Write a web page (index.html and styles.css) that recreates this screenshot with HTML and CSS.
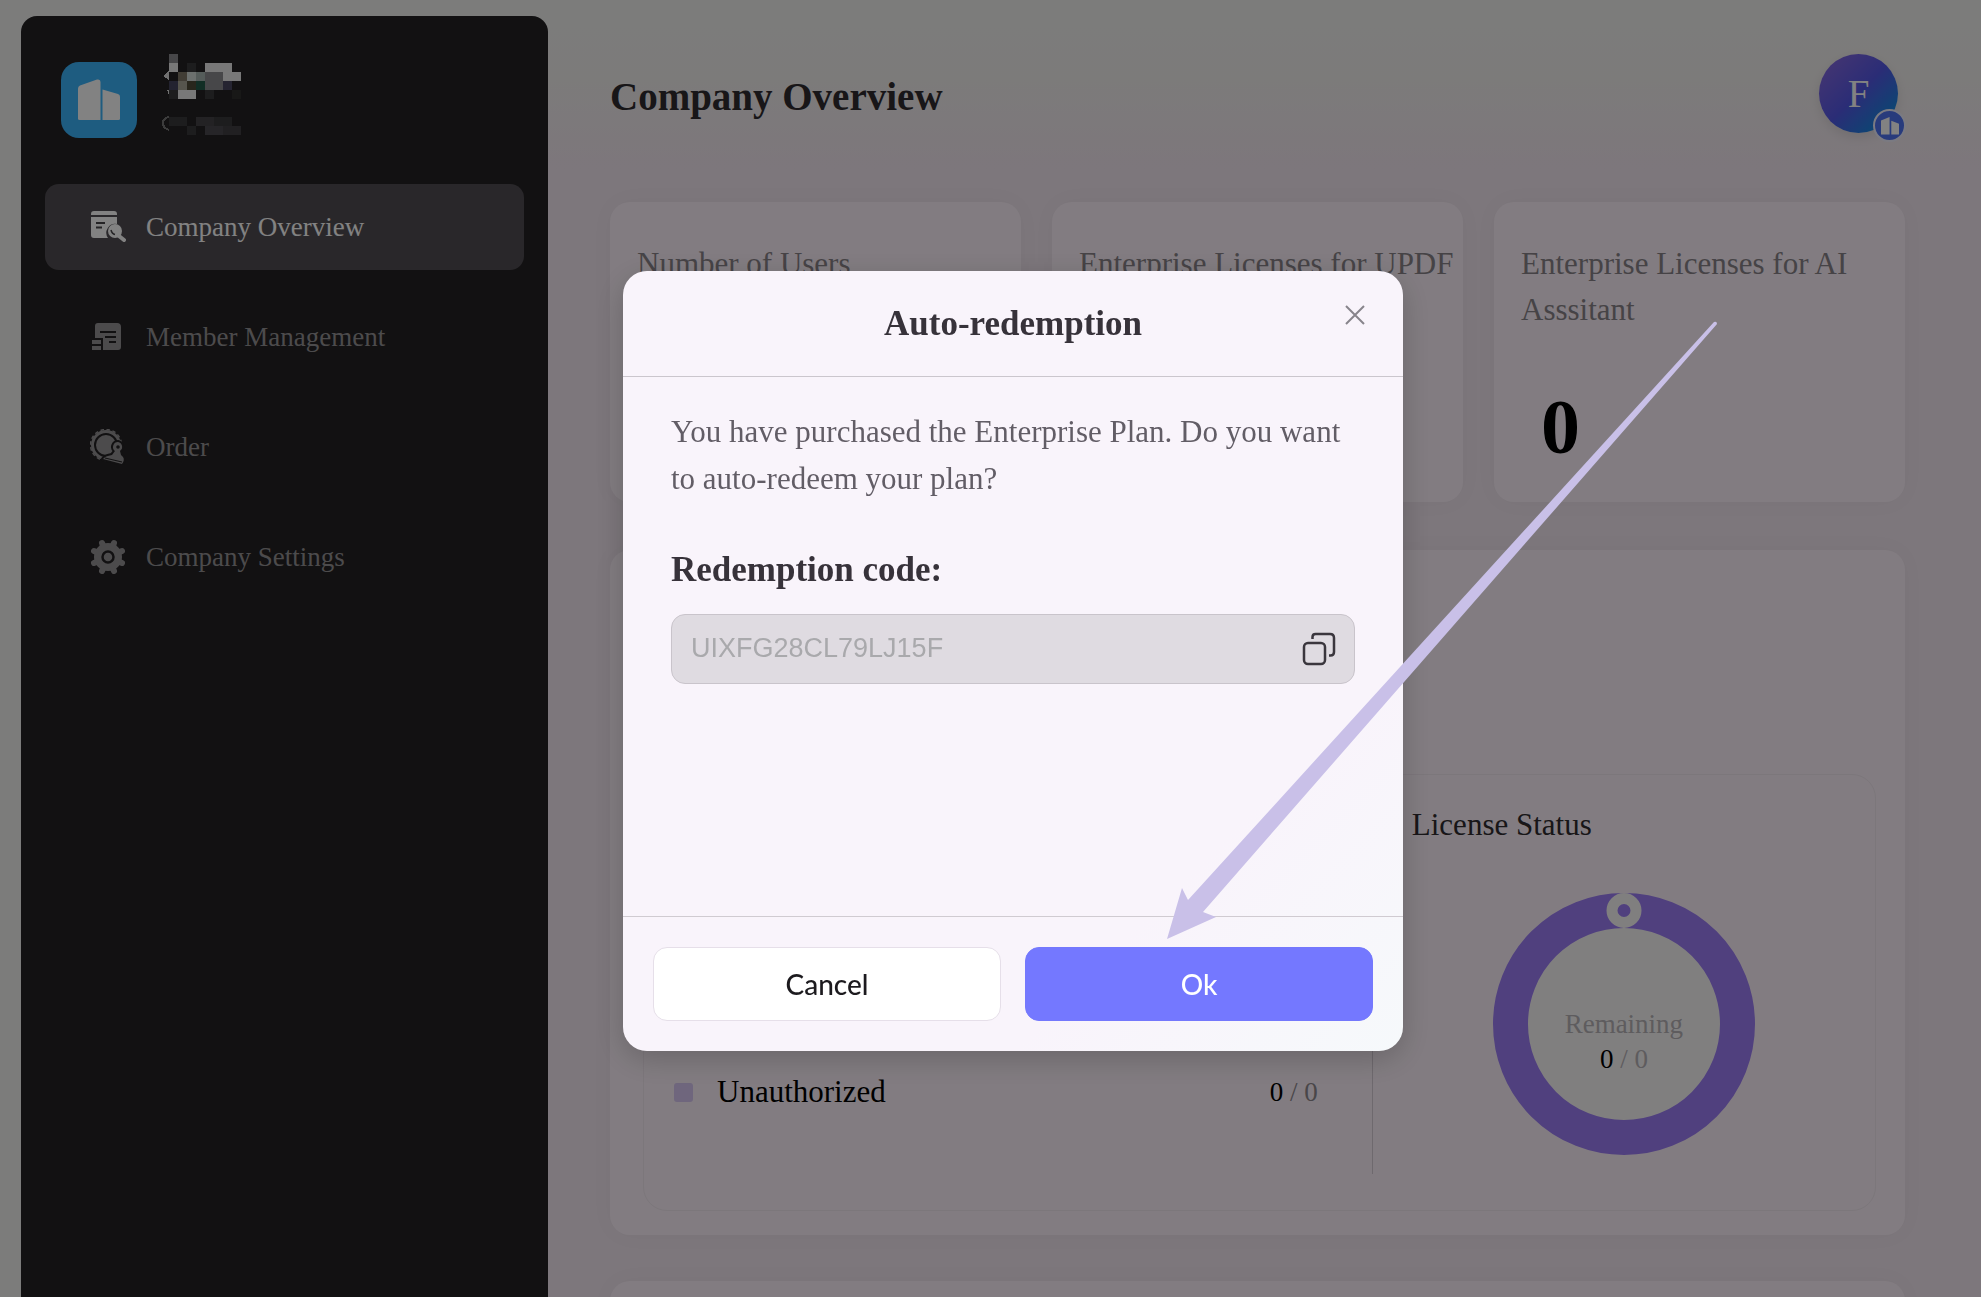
FILE: index.html
```
<!DOCTYPE html>
<html lang="en">
<head>
    <meta charset="UTF-8">
    <meta name="viewport" content="width=device-width, initial-scale=1.0">
    <title>Company Overview</title>
    <link rel="stylesheet" href="styles.css">
</head>
<body>
    <div class="app">
        <aside class="sidebar">
            <div class="company">
                <div class="company-logo">
                    <svg width="42" height="42" viewBox="0 0 42 42" fill="#fff">
                        <path d="M0 9.500Q0 7.500 2 6.500L19 .6Q22.500-.2 22.500 3V41H1.500Q0 41 0 39.500Z"/>
                        <path d="M24.500 10.500L40 15Q42 15.800 42 17.500V39.500Q42 41 40.500 41H24.500Z"/>
                    </svg>
                </div>
                <!-- name and role are masked -->
                <svg class="company-mask" width="80" height="82" viewBox="-8 0 80 82" shape-rendering="crispEdges">
                    <path d="M-6 22L0 17V26ZM-2 36H0V41Z" fill="#ddd"/>
                    <g fill="#ececec">
                        <rect x="0" y="9" width="9" height="9"/>
                        <rect x="36" y="9" width="27" height="9"/>
                        <rect x="54" y="18" width="18" height="9"/>
                        <rect x="9" y="36" width="18" height="9"/>
                    </g>
                    <g fill="#8c8c90">
                        <rect x="0" y="0" width="9" height="9"/>
                        <rect x="36" y="18" width="18" height="18"/>
                        <rect x="27" y="18" width="9" height="9" fill="#a8b4b0"/>
                        <rect x="18" y="18" width="9" height="9" fill="#d4dcd8"/>
                        <rect x="9" y="18" width="9" height="9" fill="#807868"/>
                        <rect x="9" y="27" width="9" height="9" fill="#aaa898"/>
                        <rect x="18" y="27" width="9" height="9" fill="#504c38"/>
                        <rect x="27" y="27" width="9" height="9" fill="#245a4a"/>
                        <rect x="0" y="27" width="9" height="9" fill="#46465e"/>
                        <rect x="54" y="27" width="9" height="9" fill="#4a4860"/>
                    </g>
                    <g fill="#3a3a3c">
                        <rect x="18" y="9" width="9" height="9"/>
                        <rect x="0" y="36" width="9" height="9"/>
                        <rect x="36" y="36" width="9" height="9"/>
                        <rect x="63" y="36" width="9" height="9" fill="#30302e"/>
                        <rect x="0" y="63" width="18" height="9"/>
                        <rect x="27" y="63" width="18" height="9" fill="#464448"/>
                        <rect x="45" y="63" width="18" height="9"/>
                        <rect x="18" y="72" width="9" height="9"/>
                        <rect x="36" y="72" width="18" height="9" fill="#4c4a50"/>
                        <rect x="54" y="72" width="18" height="9" fill="#424044"/>
                    </g>
                    <path d="M0 63Q-6 64-6 69T0 76" fill="none" stroke="#777" stroke-width="2"/>
                </svg>
            </div>
            <nav class="menu">
                <a class="menu-item active" href="#overview">
                    <svg width="36" height="36" viewBox="0 0 36 36">
                        <path d="M1 5Q1 2 4 2H24Q27 2 27 5V6H1ZM1 8H27V15A9 9 0 0 0 18 29H4Q1 29 1 26Z" fill="currentColor"/>
                        <path d="M6 14H15M6 18.500H12" stroke="#4a484c" stroke-width="1.800"/>
                        <circle cx="25" cy="22" r="7" fill="currentColor"/>
                        <path d="M21 21Q22 25 25 25.500" fill="none" stroke="#4a484c" stroke-width="1.500"/>
                        <path d="M29 27L34 31" stroke="currentColor" stroke-width="4" stroke-linecap="round"/>
                    </svg>
                    <span>Company Overview</span>
                </a>
                <a class="menu-item" href="#members">
                    <svg width="36" height="36" viewBox="0 0 36 36">
                        <path d="M5 7Q5 4 8 4H27Q31 4 31 8V28Q31 31 28 31H13V19H5Z" fill="currentColor"/>
                        <path d="M10 13H26M15 18H26M19 23H26" stroke="#242224" stroke-width="2"/>
                        <path d="M2 21H11V25H2ZM2 27H11V31H2Z" fill="currentColor"/>
                    </svg>
                    <span>Member Management</span>
                </a>
                <a class="menu-item" href="#orders">
                    <svg width="36" height="36" viewBox="0 0 36 36">
                        <circle cx="16" cy="16" r="13.500" fill="none" stroke="currentColor" stroke-width="3"/>
                        <circle cx="16" cy="16" r="15.500" fill="none" stroke="currentColor" stroke-width="1.500" stroke-dasharray="3.500 2.590"/>
                        <circle cx="16" cy="16" r="10" fill="currentColor"/>
                        <path d="M28 13A5 5 0 0 1 30 22L31 26L33 28Q35 31 32 35L13 30Q15 27 22 26L25 22A5 5 0 0 1 28 13Z" fill="currentColor" stroke="#242224" stroke-width="4" paint-order="stroke" stroke-linejoin="round"/>
                        <circle cx="28" cy="18" r="1.800" fill="#242224"/>
                        <path d="M15 29L32 33" stroke="#242224" stroke-width="1.200"/>
                    </svg>
                    <span>Order</span>
                </a>
                <a class="menu-item" href="#settings">
                    <svg width="36" height="36" viewBox="0 0 36 36">
                        <circle cx="18" cy="18" r="14" fill="currentColor"/>
                        <path d="M12 4L24 32M24 4L12 32M4 12L32 24M4 24L32 12" stroke="currentColor" stroke-width="6" stroke-linecap="round"/>
                        <circle cx="18" cy="18" r="5.500" fill="none" stroke="#242224" stroke-width="2.500"/>
                    </svg>
                    <span>Company Settings</span>
                </a>
            </nav>
        </aside>

        <main class="content">
            <header class="page-header">
                <h1>Company Overview</h1>
                <div class="avatar">
                    F
                    <span class="avatar-badge">
                        <svg width="18" height="18" viewBox="0 0 42 42" fill="#fff">
                            <path d="M0 8L20 0V41H0ZM24 9L42 16V41H24Z"/>
                        </svg>
                    </span>
                </div>
            </header>

            <section class="stats">
                <div class="card stat">
                    <p class="stat-label">Number of Users</p>
                </div>
                <div class="card stat">
                    <p class="stat-label">Enterprise Licenses for UPDF</p>
                </div>
                <div class="card stat">
                    <p class="stat-label">Enterprise Licenses for AI Asssitant</p>
                    <p class="stat-value">0</p>
                </div>
            </section>

            <section class="card licenses">
                <div class="panel">
                    <div class="panel-list">
                        <div class="legend">
                            <span class="legend-mark"></span>
                            <span class="legend-name">Unauthorized</span>
                            <span class="count">0 <span class="muted">/ 0</span></span>
                        </div>
                    </div>
                    <div class="panel-divider"></div>
                    <div class="panel-status">
                        <h2>License Status</h2>
                        <div class="ring">
                            <span class="ring-dot"></span>
                            <span class="ring-label">Remaining</span>
                            <span class="count">0 <span class="ring-total">/ 0</span></span>
                        </div>
                    </div>
                </div>
            </section>

            <section class="card next"></section>
        </main>
    </div>

    <div class="overlay">
        <div class="modal" role="dialog" aria-labelledby="modalTitle">
            <div class="modal-header">
                <h2 id="modalTitle">Auto-redemption</h2>
                <button class="close" aria-label="Close">
                    <svg width="20" height="20" viewBox="0 0 20 20" stroke="#88848b" stroke-width="2">
                        <path d="M1 1L19 19M19 1L1 19"/>
                    </svg>
                </button>
            </div>
            <div class="modal-body">
                <p>You have purchased the Enterprise Plan. Do you want to auto-redeem your plan?</p>
                <label for="code">Redemption code:</label>
                <div class="code-box">
                    <input id="code" type="text" value="UIXFG28CL79LJ15F" disabled>
                    <button class="copy" aria-label="Copy">
                        <svg width="34" height="34" viewBox="0 0 34 34" fill="none" stroke="#3a363d" stroke-width="2.500">
                            <rect x="2" y="11" width="21" height="21" rx="4"/>
                            <path d="M10.500 7V5Q10.500 2 13.500 2H28Q32 2 32 6V20Q32 23.500 28.500 23.500H27"/>
                        </svg>
                    </button>
                </div>
            </div>
            <div class="modal-footer">
                <button class="btn">Cancel</button>
                <button class="btn btn-primary">Ok</button>
            </div>
            <svg class="arrow" width="552" height="620" viewBox="0 0 552 620">
                <path d="M0 619L15 568L21 580L547 2Q550 1 550 4L36 592L49 597Z" fill="#c9c0e8"/>
            </svg>
        </div>
    </div>
</body>
</html>
```
FILE: styles.css
```
* {
    box-sizing: border-box;
}
body {
    margin: 0;
    font-family: "Liberation Serif", "Times New Roman", serif;
    font-size: 27px;
    color: #000;
}
h1, h2, p {
    margin: 0;
}
button {
    cursor: pointer;
}

/* page behind the dialog */
.app {
    display: flex;
    height: 100vh;
    overflow: hidden;
    background-color: #f4f4f2;
}
.sidebar {
    flex: none;
    width: 527px;
    margin: 16px 0 0 21px;
    padding: 0 24px;
    background-color: #242224;
    border-radius: 16px 16px 0 0;
}
.company {
    display: flex;
    gap: 24px;
    padding: 38px 16px 38px;
}
.company-logo {
    display: flex;
    align-items: center;
    justify-content: center;
    width: 76px;
    height: 76px;
    margin-top: 8px;
    border-radius: 18px;
    background-color: #3cb4fc;
}
.menu {
    display: flex;
    flex-direction: column;
    gap: 24px;
    margin-top: 8px;
}
.menu-item {
    display: flex;
    align-items: center;
    gap: 20px;
    height: 86px;
    padding: 0 45px;
    border-radius: 14px;
    color: #969496;
    text-decoration: none;
}
.menu-item.active {
    background-color: #524e54;
    color: #fff;
}
.content {
    flex: 1;
    padding: 0 76px 0 62px;
    background: linear-gradient(180deg, #f4f4f2 0, #f4f1f0 80px, #f5e9f3 170px);
}
.page-header {
    display: flex;
    align-items: center;
    justify-content: space-between;
    padding: 54px 7px 69px 0;
}
h1 {
    padding-top: 5px;
    font-size: 39px;
    color: #302c30;
}
.avatar {
    position: relative;
    display: flex;
    align-items: center;
    justify-content: center;
    width: 79px;
    height: 79px;
    border-radius: 50%;
    background: linear-gradient(135deg, #8468e0 10%, #5458e8 50%, #1090e0 90%);
    box-shadow: 0 4px 12px rgba(0, 0, 0, 0.1);
    color: #fff;
    font-size: 39px;
}
.avatar-badge {
    position: absolute;
    right: -8px;
    bottom: -9px;
    display: flex;
    align-items: center;
    justify-content: center;
    width: 33px;
    height: 33px;
    border: 2px solid #f0f0ff;
    border-radius: 50%;
    background-color: #5074f4;
}
.card {
    border-radius: 20px;
    background-color: #fff4fd;
    box-shadow: 0 0 24px rgba(0, 0, 0, 0.03);
}
.stats {
    display: grid;
    grid-template-columns: repeat(3, 1fr);
    gap: 31px;
    margin-bottom: 48px;
}
.stat {
    display: flex;
    flex-direction: column;
    justify-content: space-between;
    min-height: 300px;
    padding: 39px 0 35px 27px;
}
.stat-label {
    font-size: 31px;
    line-height: 46px;
    color: #8a848a;
}
.stat-value {
    padding-left: 20px;
    font-size: 78px;
    font-weight: bold;
    line-height: 80px;
}
.licenses {
    margin-bottom: 46px;
    padding: 224px 29px 24px 33px;
}
.panel {
    display: grid;
    grid-template-columns: 729fr 1px 503fr;
    border: 1px solid #f4e9f2;
    border-radius: 24px;
}
.panel-list {
    display: flex;
    flex-direction: column;
    justify-content: flex-end;
    padding: 0 54px 98px 30px;
}
.legend {
    display: flex;
    align-items: center;
    gap: 24px;
    line-height: 40px;
}
.legend-mark {
    width: 19px;
    height: 19px;
    border-radius: 3px;
    background-color: #d9c9f6;
}
.legend-name {
    flex: 1;
    font-size: 31px;
}
.muted {
    color: #908a90;
}
.panel-divider {
    margin: 36px 0;
    background-color: #d8ced8;
}
.panel-status {
    padding: 30px 0 55px;
}
.panel-status h2 {
    padding-left: 39px;
    font-size: 31px;
    font-weight: normal;
    line-height: 40px;
    color: #302c30;
}
.ring {
    position: relative;
    display: flex;
    flex-direction: column;
    align-items: center;
    justify-content: center;
    width: 262px;
    height: 262px;
    margin: 48px auto 0;
    padding-top: 36px;
    border: 35px solid #9e7ef8;
    border-radius: 50%;
    background-color: #fcfafa;
    line-height: 35px;
}
.ring-dot {
    position: absolute;
    top: -35px;
    left: 50%;
    width: 35px;
    height: 35px;
    border: 11px solid #fcfafa;
    border-radius: 50%;
    background-color: #9e7ef8;
    transform: translateX(-50%);
}
.ring-label, .ring-total {
    color: #b8b4b8;
}
.next {
    height: 300px;
}

/* dialog */
.overlay {
    position: fixed;
    inset: 0;
    display: flex;
    align-items: center;
    justify-content: center;
    padding: 24px 0 0 45px;
    background-color: rgba(0, 0, 0, 0.49);
}
.modal {
    position: relative;
    display: flex;
    flex-direction: column;
    width: 780px;
    min-height: 780px;
    border-radius: 24px;
    background: linear-gradient(135deg, #f9f4fb 75%, #f6f9fb 100%);
    box-shadow: 0 8px 30px rgba(0, 0, 0, 0.2);
}
.modal-header {
    display: flex;
    justify-content: center;
    padding: 33px 0 32px;
    border-bottom: 1px solid #cbc6cd;
}
.modal-header h2 {
    font-size: 35px;
    line-height: 40px;
    color: #37323a;
}
.close {
    position: absolute;
    top: 34px;
    right: 38px;
    display: flex;
    padding: 0;
    border: none;
    background: none;
}
.modal-body {
    flex: 1;
    padding: 31px 48px;
}
.modal-body p {
    margin-bottom: 48px;
    font-size: 31px;
    line-height: 47px;
    color: #625d66;
}
.modal-body label {
    display: block;
    margin-bottom: 24px;
    font-size: 35px;
    font-weight: bold;
    line-height: 40px;
    color: #37323a;
}
.code-box {
    display: flex;
    align-items: center;
    height: 70px;
    padding: 0 18px 0 19px;
    border: 1px solid #c9c4cb;
    border-radius: 14px;
    background-color: #dfdbe1;
}
.code-box input {
    flex: 1;
    padding: 0;
    border: none;
    background: none;
    color: #a9a9ac;
    font-family: "Liberation Sans", Arial, sans-serif;
    font-size: 27px;
}
.copy {
    display: flex;
    padding: 0;
    border: none;
    background: none;
}
.modal-footer {
    display: grid;
    grid-template-columns: 1fr 1fr;
    gap: 24px;
    padding: 30px;
    border-top: 1px solid #d0cbd1;
}
.btn {
    height: 74px;
    border: 1px solid #e6dfe9;
    border-radius: 14px;
    background-color: #fff;
    color: #1c1a1e;
    font-family: Lato, sans-serif;
    font-size: 28px;
    font-weight: 500;
}
.btn-primary {
    border-color: #7478fc;
    background-color: #7478ff;
    color: #fff;
}
/* pointer from the licence card to the Ok button */
.arrow {
    position: absolute;
    top: 49px;
    left: 544px;
    pointer-events: none;
}
```
